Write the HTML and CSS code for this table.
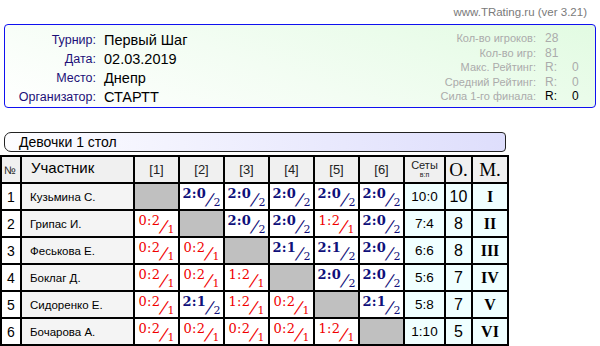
FILE: index.html
```html
<!DOCTYPE html>
<html>
<head>
<meta charset="utf-8">
<link rel="stylesheet" href="styles.css">
</head>
<body>
<div class="site">www.TRating.ru (ver 3.21)</div>
<div class="info">
  <div class="main">
    <span class="lb">Турнир:</span><span class="vl">Первый Шаг</span>
    <span class="lb">Дата:</span><span class="vl">02.03.2019</span>
    <span class="lb">Место:</span><span class="vl">Днепр</span>
    <span class="lb">Организатор:</span><span class="vl">СТАРТТ</span>
  </div>
  <div class="stats">
    <span class="lb">Кол-во игроков:</span><span class="vl">28</span>
    <span class="lb">Кол-во игр:</span><span class="vl">81</span>
    <span class="lb">Макс. Рейтинг:</span><span class="vl"><span class="r">R:</span>0</span>
    <span class="lb">Средний Рейтинг:</span><span class="vl"><span class="r">R:</span>0</span>
    <span class="lb">Сила 1-го финала:</span><span class="vl dark"><span class="r">R:</span>0</span>
  </div>
</div>
<div class="group">Девочки 1 стол</div>
<table class="cross">
  <tr class="head">
    <th class="c-no">№</th>
    <th class="c-name">Участник</th>
    <th class="c-g">[1]</th>
    <th class="c-g">[2]</th>
    <th class="c-g">[3]</th>
    <th class="c-g">[4]</th>
    <th class="c-g">[5]</th>
    <th class="c-g">[6]</th>
    <th class="c-sets">Сеты<div class="vp">в:п</div></th>
    <th class="c-pts">О.</th>
    <th class="c-pl">М.</th>
  </tr>
  <tr>
    <td class="no">1</td><td class="name">Кузьмина С.</td>
    <td class="x"></td>
    <td><div class="sc w"><b>2:0</b><i>/</i><span class="p">2</span></div></td>
    <td><div class="sc w"><b>2:0</b><i>/</i><span class="p">2</span></div></td>
    <td><div class="sc w"><b>2:0</b><i>/</i><span class="p">2</span></div></td>
    <td><div class="sc w"><b>2:0</b><i>/</i><span class="p">2</span></div></td>
    <td><div class="sc w"><b>2:0</b><i>/</i><span class="p">2</span></div></td>
    <td class="sets">10:0</td><td class="pts">10</td><td class="pl">I</td>
  </tr>
  <tr>
    <td class="no">2</td><td class="name">Грипас И.</td>
    <td><div class="sc l"><b>0:2</b><i>/</i><span class="p">1</span></div></td>
    <td class="x"></td>
    <td><div class="sc w"><b>2:0</b><i>/</i><span class="p">2</span></div></td>
    <td><div class="sc w"><b>2:0</b><i>/</i><span class="p">2</span></div></td>
    <td><div class="sc l"><b>1:2</b><i>/</i><span class="p">1</span></div></td>
    <td><div class="sc w"><b>2:0</b><i>/</i><span class="p">2</span></div></td>
    <td class="sets">7:4</td><td class="pts">8</td><td class="pl">II</td>
  </tr>
  <tr>
    <td class="no">3</td><td class="name">Феськова Е.</td>
    <td><div class="sc l"><b>0:2</b><i>/</i><span class="p">1</span></div></td>
    <td><div class="sc l"><b>0:2</b><i>/</i><span class="p">1</span></div></td>
    <td class="x"></td>
    <td><div class="sc w"><b>2:1</b><i>/</i><span class="p">2</span></div></td>
    <td><div class="sc w"><b>2:1</b><i>/</i><span class="p">2</span></div></td>
    <td><div class="sc w"><b>2:0</b><i>/</i><span class="p">2</span></div></td>
    <td class="sets">6:6</td><td class="pts">8</td><td class="pl">III</td>
  </tr>
  <tr>
    <td class="no">4</td><td class="name">Боклаг Д.</td>
    <td><div class="sc l"><b>0:2</b><i>/</i><span class="p">1</span></div></td>
    <td><div class="sc l"><b>0:2</b><i>/</i><span class="p">1</span></div></td>
    <td><div class="sc l"><b>1:2</b><i>/</i><span class="p">1</span></div></td>
    <td class="x"></td>
    <td><div class="sc w"><b>2:0</b><i>/</i><span class="p">2</span></div></td>
    <td><div class="sc w"><b>2:0</b><i>/</i><span class="p">2</span></div></td>
    <td class="sets">5:6</td><td class="pts">7</td><td class="pl">IV</td>
  </tr>
  <tr>
    <td class="no">5</td><td class="name">Сидоренко Е.</td>
    <td><div class="sc l"><b>0:2</b><i>/</i><span class="p">1</span></div></td>
    <td><div class="sc w"><b>2:1</b><i>/</i><span class="p">2</span></div></td>
    <td><div class="sc l"><b>1:2</b><i>/</i><span class="p">1</span></div></td>
    <td><div class="sc l"><b>0:2</b><i>/</i><span class="p">1</span></div></td>
    <td class="x"></td>
    <td><div class="sc w"><b>2:1</b><i>/</i><span class="p">2</span></div></td>
    <td class="sets">5:8</td><td class="pts">7</td><td class="pl">V</td>
  </tr>
  <tr>
    <td class="no">6</td><td class="name">Бочарова А.</td>
    <td><div class="sc l"><b>0:2</b><i>/</i><span class="p">1</span></div></td>
    <td><div class="sc l"><b>0:2</b><i>/</i><span class="p">1</span></div></td>
    <td><div class="sc l"><b>0:2</b><i>/</i><span class="p">1</span></div></td>
    <td><div class="sc l"><b>0:2</b><i>/</i><span class="p">1</span></div></td>
    <td><div class="sc l"><b>1:2</b><i>/</i><span class="p">1</span></div></td>
    <td class="x"></td>
    <td class="sets">1:10</td><td class="pts">5</td><td class="pl">VI</td>
  </tr>
</table>
</body>
</html>
```

FILE: styles.css
```css
html, body {
  margin: 0;
  padding: 0;
  background: #fff;
}
body {
  font-family: "Liberation Sans", Arial, sans-serif;
  color: #000;
  width: 600px;
  height: 346px;
  overflow: hidden;
}
.site {
  height: 24px;
  line-height: 24px;
  text-align: right;
  padding-right: 13px;
  font-size: 11.5px;
  color: #7a7a7a;
}
.info {
  margin: 0 4px;
  height: 82px;
  border: 1px solid #1010f0;
  border-radius: 4px;
  background: linear-gradient(200deg, #e2fbe2 0%, #f3fdf3 55%, #ffffff 100%);
  display: flex;
  justify-content: space-between;
}
.main {
  display: grid;
  grid-template-columns: 91px auto;
  grid-auto-rows: 19px;
  column-gap: 8px;
  align-items: center;
  padding-top: 5px;
}
.main .lb {
  text-align: right;
  font-size: 12.5px;
  color: #1c1078;
}
.main .vl {
  font-size: 14.5px;
  color: #000;
}
.stats {
  display: grid;
  grid-template-columns: auto 40px;
  grid-auto-rows: 14.5px;
  column-gap: 9px;
  align-items: center;
  padding-top: 6px;
  padding-right: 10px;
  font-size: 11.5px;
  color: #ababab;
}
.stats .lb {
  text-align: right;
  font-size: 11px;
}
.stats .vl {
  font-size: 12px;
}
.stats .r {
  display: inline-block;
  width: 27px;
}
.stats .dark {
  color: #000;
}
.group {
  margin: 24px 0 0 4px;
  width: 486px;
  height: 18px;
  line-height: 18px;
  padding-left: 14px;
  border: 1px solid #222;
  border-radius: 7px 4px 4px 7px;
  background: linear-gradient(to right, #fdfdff 0%, #dedefc 100%);
  font-size: 14px;
}
.cross {
  margin-top: 3px;
  border: 1px solid #000;
  border-spacing: 0;
  table-layout: fixed;
  width: 509px;
}
.cross th, .cross td {
  box-sizing: border-box;
  border: 1px solid #000;
  height: 27px;
  padding: 0;
}
.cross th {
  background: #f0f0f0;
  font-weight: normal;
  color: #222;
}
.c-no { width: 20px; font-size: 11px; text-align: left; padding-left: 2px !important; vertical-align: middle; }
.c-name { width: 113px; font-size: 15px; text-align: left; padding-left: 9px !important; padding-bottom: 4px !important; color: #000 !important; }
.c-g { width: 45px; font-size: 13px; }
.c-sets { width: 41px; font-size: 11px; line-height: 11px; }
.c-sets .vp { font-size: 7px; line-height: 8px; }
.c-pts, .c-pl {
  font-family: "Liberation Serif", "Times New Roman", serif;
  font-size: 19px;
  color: #000 !important;
}
.c-pts { width: 27px; }
.c-pl { width: 36px; }
.no {
  text-align: center;
  font-size: 14px;
}
.name {
  background: #f4f4f4;
  font-size: 11.5px;
  padding-left: 8px !important;
}
.x {
  background: #c0c0c0;
}
.sets, .pts, .pl {
  background: #f0ffff;
  text-align: center;
}
.sets { font-size: 13.5px; }
.pts { font-size: 16px; }
.pl {
  font-family: "Liberation Serif", "Times New Roman", serif;
  font-weight: bold;
  font-size: 16px;
}
.cross td:has(.sc) {
  vertical-align: top;
}
.sc {
  display: flex;
  justify-content: center;
  height: 20px;
  margin-top: 4px;
  font-family: "DejaVu Serif", serif;
}
.sc b {
  align-self: flex-start;
  font-size: 13px;
  line-height: 12px;
  letter-spacing: 0.3px;
}
.sc i {
  align-self: center;
  font-style: normal;
  font-family: "DejaVu Sans", sans-serif;
  font-size: 16px;
  line-height: 16px;
  margin: 3px 0 0 1px;
  transform: skewX(-20deg);
}
.sc .p {
  align-self: flex-end;
  font-size: 11px;
  line-height: 10px;
  margin-left: 1px;
}
.sc.w { color: #10107a; }
.sc.w b { font-weight: bold; }
.sc.l { color: #f00000; }
.sc.l b { font-weight: normal; }
```
